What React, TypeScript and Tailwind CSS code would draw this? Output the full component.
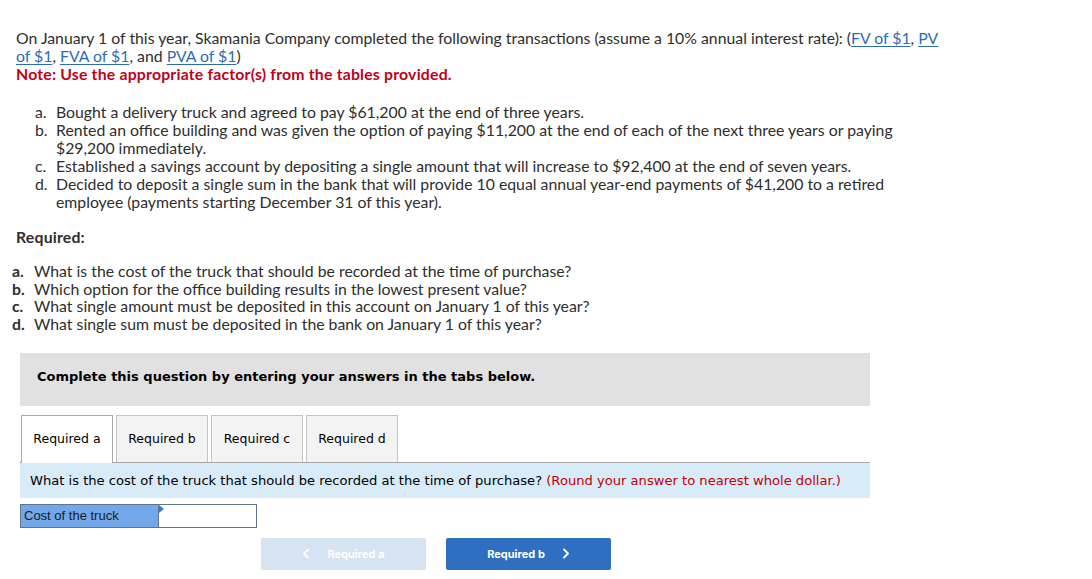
import React from 'react'

const body = { fontFamily: 'Lato, "Open Sans", sans-serif' }
const verdana = { fontFamily: '"DejaVu Sans", Verdana, sans-serif' }

function Link({ children }: { children: React.ReactNode }) {
    return <a className="text-[#2b6cb3] underline underline-offset-2">{children}</a>
}

function Chevron({ dir }: { dir: 'left' | 'right' }) {
    return (
        <svg width="8" height="11" viewBox="0 0 8 11" fill="none">
            <path
                d={dir === 'left' ? 'M6 1.5L2 5.5l4 4' : 'M2 1.5l4 4-4 4'}
                stroke="currentColor"
                strokeWidth="1.8"
                strokeLinecap="round"
                strokeLinejoin="round"
            />
        </svg>
    )
}

export default function App() {
    const tabs = ['Required a', 'Required b', 'Required c', 'Required d']

    return (
        <div className="min-h-[579px] w-[1092px] bg-white pl-4 pt-[29px] text-[15.8px] leading-[18px] text-[#2e2e2e]" style={body}>
            {/* Intro */}
            <p className="whitespace-nowrap">
                On January 1 of this year, Skamania Company completed the following transactions (assume a 10% annual interest rate): (
                <Link>FV of $1</Link>, <Link>PV</Link>
                <br />
                <Link>of $1</Link>, <Link>FVA of $1</Link>, and <Link>PVA of $1</Link>)
            </p>
            <p className="font-bold tracking-[0.2px] text-[#c1001b]">Note: Use the appropriate factor(s) from the tables provided.</p>

            {/* Transactions */}
            <ol className="mt-[20px] whitespace-nowrap">
                <li className="flex">
                    <span className="w-[40px] pl-[19px]">a.</span>
                    <span>Bought a delivery truck and agreed to pay $61,200 at the end of three years.</span>
                </li>
                <li className="flex">
                    <span className="w-[40px] pl-[19px]">b.</span>
                    <span>
                        Rented an office building and was given the option of paying $11,200 at the end of each of the next three years or paying
                        <br />
                        $29,200 immediately.
                    </span>
                </li>
                <li className="flex">
                    <span className="w-[40px] pl-[19px]">c.</span>
                    <span>Established a savings account by depositing a single amount that will increase to $92,400 at the end of seven years.</span>
                </li>
                <li className="flex">
                    <span className="w-[40px] pl-[19px]">d.</span>
                    <span>
                        Decided to deposit a single sum in the bank that will provide 10 equal annual year-end payments of $41,200 to a retired
                        <br />
                        employee (payments starting December 31 of this year).
                    </span>
                </li>
            </ol>

            {/* Required */}
            <p className="mt-[17px] font-bold tracking-[0.2px]">Required:</p>
            <ol className="mt-[16px] -ml-[4px] whitespace-nowrap leading-[17.7px]">
                <li className="flex">
                    <span className="w-[22px] font-bold">a.</span>
                    <span>What is the cost of the truck that should be recorded at the time of purchase?</span>
                </li>
                <li className="flex">
                    <span className="w-[22px] font-bold">b.</span>
                    <span>Which option for the office building results in the lowest present value?</span>
                </li>
                <li className="flex">
                    <span className="w-[22px] font-bold">c.</span>
                    <span>What single amount must be deposited in this account on January 1 of this year?</span>
                </li>
                <li className="flex">
                    <span className="w-[22px] font-bold">d.</span>
                    <span>What single sum must be deposited in the bank on January 1 of this year?</span>
                </li>
            </ol>

            {/* Instruction box */}
            <div className="ml-1 mt-[20px] h-[53px] w-[850px] bg-[#e1e1e1] pl-[17px] pt-[14px] leading-[16px]">
                <span className="text-[13px] font-bold text-black" style={verdana}>
                    Complete this question by entering your answers in the tabs below.
                </span>
            </div>

            {/* Tabs */}
            <div className="ml-1 mt-[9px] w-[850px]" style={verdana}>
                <div className="flex items-end border-b border-[#a8a8a8]">
                    {tabs.map((t, i) => (
                        <div
                            key={t}
                            className={
                                i === 0
                                    ? 'relative -mb-px ml-px flex h-[48px] w-[92px] items-center justify-center border border-b-0 border-[#a8a8a8] bg-white text-[12.5px] text-black'
                                    : 'ml-[3px] flex h-[47px] w-[92px] items-center justify-center border border-b-0 border-[#c4c4c4] bg-[#f3f3f3] text-[12.5px] text-black'
                            }
                        >
                            {t}
                        </div>
                    ))}
                </div>
                <div className="flex h-[35px] items-center bg-[#d8ebf8] pl-[10px] pt-px text-[13.1px] text-black">
                    What is the cost of the truck that should be recorded at the time of purchase?&nbsp;
                    <span className="text-[#c40000]">(Round your answer to nearest whole dollar.)</span>
                </div>
            </div>

            {/* Answer row */}
            <div className="ml-1 mt-[6px] flex h-[24px] w-[237px] border border-[#5f7490]">
                <div
                    className="flex w-[137px] items-center bg-[#72a8ea] pl-[3px] text-[13px] text-[#1a1a1a]"
                    style={{ fontFamily: '"Liberation Sans", Arial, sans-serif' }}
                >
                    Cost of the truck
                </div>
                <div className="relative flex-1 border-l border-[#5f7490] bg-white">
                    <span className="absolute left-0 top-0 h-0 w-0 border-y-[4px] border-l-[5px] border-y-transparent border-l-[#3a78c9]" />
                </div>
            </div>

            {/* Nav buttons */}
            <div className="ml-[245px] mt-[10px] flex gap-5" style={{ fontFamily: 'Inter, Lato, sans-serif' }}>
                <button className="flex h-[32px] w-[165px] items-center justify-center gap-[17px] rounded-[2px] bg-[#d5e3f2] text-[11px] font-bold text-white">
                    <Chevron dir="left" />
                    <span>Required a</span>
                </button>
                <button className="flex h-[32px] w-[165px] items-center justify-center gap-[17px] rounded-[2px] bg-[#2e6fc1] text-[11px] font-bold text-white">
                    <span>Required b</span>
                    <Chevron dir="right" />
                </button>
            </div>
        </div>
    )
}
